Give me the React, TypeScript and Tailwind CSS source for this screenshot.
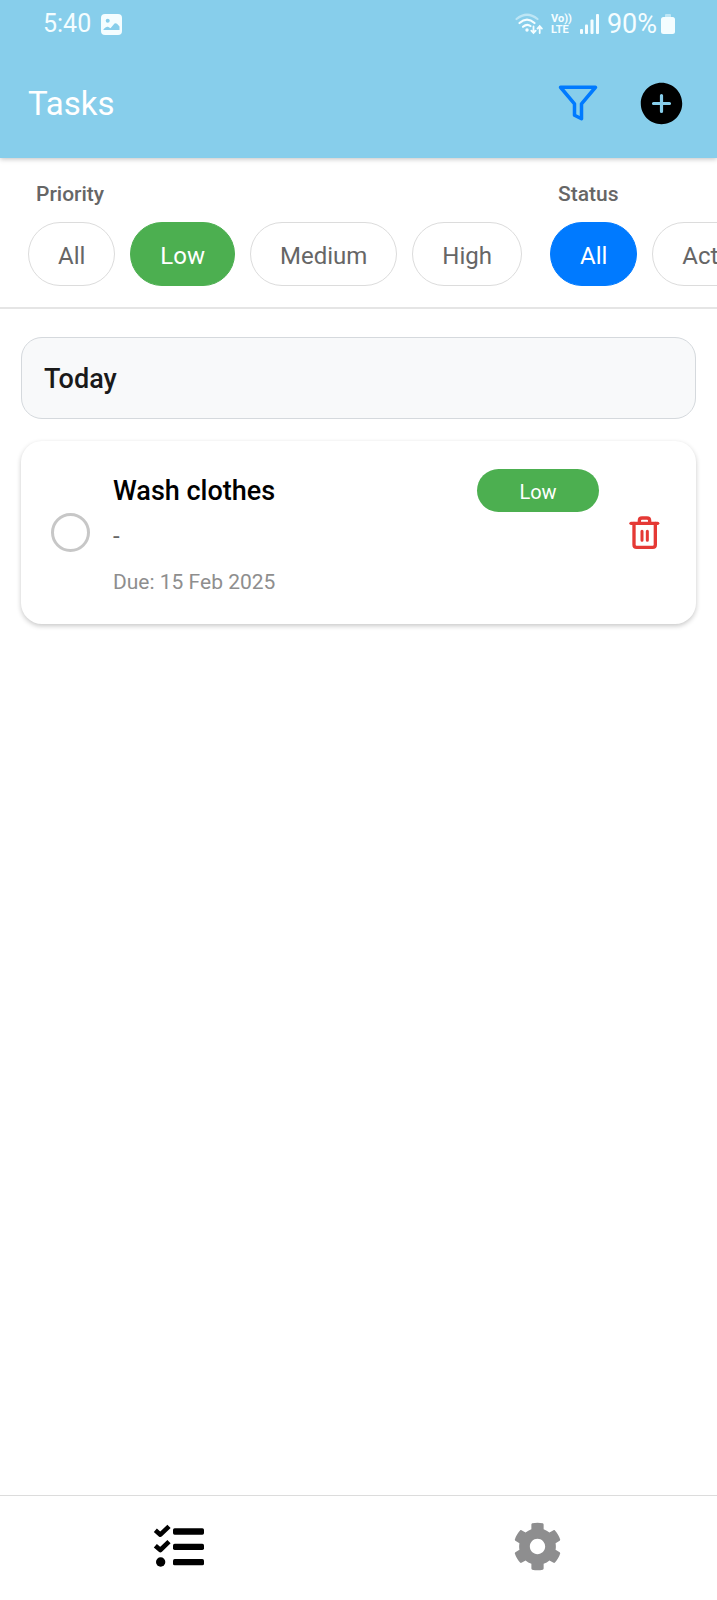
import React, { useState } from "react";
import { FaCog } from "react-icons/fa";
import { FiFilter } from "react-icons/fi";
import { IoAddCircle } from "react-icons/io5";

const priorities = ["All", "Low", "Medium", "High"];
const statuses = ["All", "Active", "Completed"];

function TrashIcon() {
  return (
    <svg viewBox="0 8 150 150" className="size-[50px]" aria-hidden="true" fill="none" stroke="currentColor" strokeWidth="10" strokeLinecap="round" strokeLinejoin="round">
      <path d="M33 54 H113" />
      <path d="M42 54 V118 Q42 126 50 126 H98 Q106 126 106 118 V54" />
      <path d="M58 54 V46 Q58 38 66 38 H81 Q89 38 89 46 V54" />
      <path d="M66 78 V105 M82 78 V105" strokeWidth="9" />
    </svg>
  );
}

function ChecklistIcon() {
  return (
    <svg viewBox="-3 4 210 180" className="h-[60px] w-[70px]" aria-hidden="true" fill="currentColor">
      <g fill="none" stroke="currentColor" strokeWidth="14" strokeLinejoin="round">
        <path d="M31 47 L46 60 L72 35" />
        <path d="M31 93 L46 106 L72 81" />
      </g>
      <circle cx="47" cy="142" r="14" />
      <rect x="84" y="41" width="93" height="19" rx="5" />
      <rect x="84" y="87" width="93" height="19" rx="5" />
      <rect x="84" y="133" width="93" height="19" rx="5" />
    </svg>
  );
}

function StatusBar() {
  return (
    <div className="flex h-12 items-center justify-between pr-[42px] pl-[43px] text-[25px] leading-8 text-[#f4fdff]">
      <div className="flex items-center gap-2.5">
        <span>5:40</span>
        <svg viewBox="0 0 21 21" className="size-[21px]" aria-hidden="true">
          <rect width="21" height="21" rx="4" fill="currentColor" />
          <circle cx="6.7" cy="6.7" r="2" fill="#87ceeb" />
          <path d="M2.5 16 V15.2 Q5 12 7 12.8 L9.5 14.2 L13.5 9.6 Q14.8 8.6 16 9.8 L18.5 12.6 V16 Z" fill="#87ceeb" />
        </svg>
      </div>
      <div className="flex items-center gap-2">
        <svg viewBox="0 0 28 22" className="h-[22px] w-7" aria-hidden="true" fill="none" stroke="currentColor" strokeWidth="2.2" strokeLinecap="round">
          <path d="M1.5 6 Q12 -2.5 22.5 6" opacity="0.5" />
          <path d="M4.5 10 Q12 3.4 19.5 10" />
          <path d="M8 13.8 Q12 10.2 15.5 13" />
          <circle cx="12" cy="17" r="1.7" fill="currentColor" stroke="none" />
          <path d="M18.5 13.5 V19.5 M16.3 17.6 L18.5 20 L20.7 17.6" strokeWidth="1.8" />
          <path d="M24.7 20 V14 M22.5 15.6 L24.7 13.2 L26.9 15.6" strokeWidth="1.8" />
        </svg>
        <span className="flex flex-col text-[11px] leading-[11px] font-bold">
          <span>Vo))</span>
          <span>LTE</span>
        </span>
        <svg viewBox="0 0 19 20" className="h-5 w-[19px]" aria-hidden="true" fill="currentColor">
          <rect x="0" y="15" width="3" height="5" rx="1" />
          <rect x="5" y="10.5" width="3" height="9.5" rx="1" />
          <rect x="10.5" y="5.5" width="3" height="14.5" rx="1" />
          <rect x="16" y="0" width="3" height="20" rx="1" />
        </svg>
        <div className="flex items-center gap-1">
          <span className="text-[27px]">90%</span>
          <svg viewBox="0 0 14 20" className="h-5 w-3.5" aria-hidden="true" fill="currentColor">
            <rect x="4" y="0" width="6" height="4" rx="1" opacity="0.5" />
            <rect x="0" y="3" width="14" height="17" rx="2.5" />
          </svg>
        </div>
      </div>
    </div>
  );
}

function FilterGroup({
  title,
  options,
  value,
  activeClass,
  onChange,
}: {
  title: string;
  options: string[];
  value: string;
  activeClass: string;
  onChange: (v: string) => void;
}) {
  return (
    <section className="shrink-0" aria-label={title}>
      <h2 className="mb-3.5 px-2 text-[21px] leading-7 font-medium text-[#666]">{title}</h2>
      <div className="flex gap-[15px]">
        {options.map((o) => (
          <button
            key={o}
            type="button"
            aria-pressed={o === value}
            onClick={() => onChange(o)}
            className={
              "h-16 shrink-0 rounded-full border px-[29px] pt-1 text-[24px] leading-8 " +
              (o === value ? activeClass : "border-[#dcdcdc] bg-white text-[#666]")
            }
          >
            {o}
          </button>
        ))}
      </div>
    </section>
  );
}

export default function App() {
  const [priority, setPriority] = useState("Low");
  const [status, setStatus] = useState("All");
  const [done, setDone] = useState(false);

  return (
    <div className="flex min-h-screen flex-col bg-white font-[Roboto,sans-serif]">
      <header className="relative bg-[#87ceeb] shadow-[0_1px_5px_rgba(0,0,0,0.25)]">
        <StatusBar />
        <div className="flex h-[110px] items-center justify-between pr-[30px] pl-7">
          <h1 className="pt-0.5 text-[33px] leading-10 text-white">Tasks</h1>
          <div className="flex items-center gap-[37px]">
            <button type="button" aria-label="Filter tasks" className="text-[#007aff]">
              <FiFilter className="size-[42px]" />
            </button>
            <button type="button" aria-label="Add task" className="text-black">
              <IoAddCircle className="size-[51px]" />
            </button>
          </div>
        </div>
      </header>

      <div className="flex gap-7 overflow-hidden border-b-2 border-[#e5e5e5] px-7 pt-[22px] pb-[21px]">
        <FilterGroup
          title="Priority"
          options={priorities}
          value={priority}
          activeClass="border-[#4caf50] bg-[#4caf50] text-white"
          onChange={setPriority}
        />
        <FilterGroup
          title="Status"
          options={statuses}
          value={status}
          activeClass="border-[#007aff] bg-[#007aff] text-white"
          onChange={setStatus}
        />
      </div>

      <main className="flex flex-1 flex-col gap-[22px] px-[21px] py-7">
        <h2 className="flex h-[82px] items-center rounded-[21px] border border-[#d5d9dd] bg-[#f8f9fa] px-[22px] pt-0.5 text-[27px] leading-8 font-medium text-[#1a1a1a]">
          Today
        </h2>
        <article className="flex items-center rounded-[21px] bg-white py-7 pr-[26px] pl-[30px] shadow-[0_2px_5px_rgba(0,0,0,0.22)]">
          <input
            type="checkbox"
            aria-label="Mark Wash clothes as done"
            checked={done}
            onChange={(e) => setDone(e.target.checked)}
            className="size-[39px] shrink-0 appearance-none rounded-full border-[3px] border-[#c7c7c7] checked:bg-[#4caf50]"
          />
          <div className="ml-[23px] flex-1">
            <div className="flex items-center justify-between">
              <h3 className="text-[27px] leading-8 font-medium text-black">Wash clothes</h3>
              <span className="flex h-[43px] w-[122px] items-center justify-center rounded-full bg-[#4caf50] pt-0.5 text-[20px] leading-7 text-white">
                Low
              </span>
            </div>
            <p className="mt-2 text-[24px] leading-8 text-[#666]">-</p>
            <p className="mt-4 text-[21px] leading-7 text-[#8e8e8e]">Due: 15 Feb 2025</p>
          </div>
          <button type="button" aria-label="Delete Wash clothes" className="ml-[21px] text-[#e53935]">
            <TrashIcon />
          </button>
        </article>
      </main>

      <nav className="flex h-[105px] border-t border-[#dcdcdc] bg-white pb-1" aria-label="Main">
        <a href="#tasks" aria-label="Tasks" aria-current="page" className="flex flex-1 items-center justify-center text-black">
          <ChecklistIcon />
        </a>
        <a href="#settings" aria-label="Settings" className="flex flex-1 items-center justify-center text-[#8e8e8f]">
          <FaCog className="size-[49px]" />
        </a>
      </nav>
    </div>
  );
}
